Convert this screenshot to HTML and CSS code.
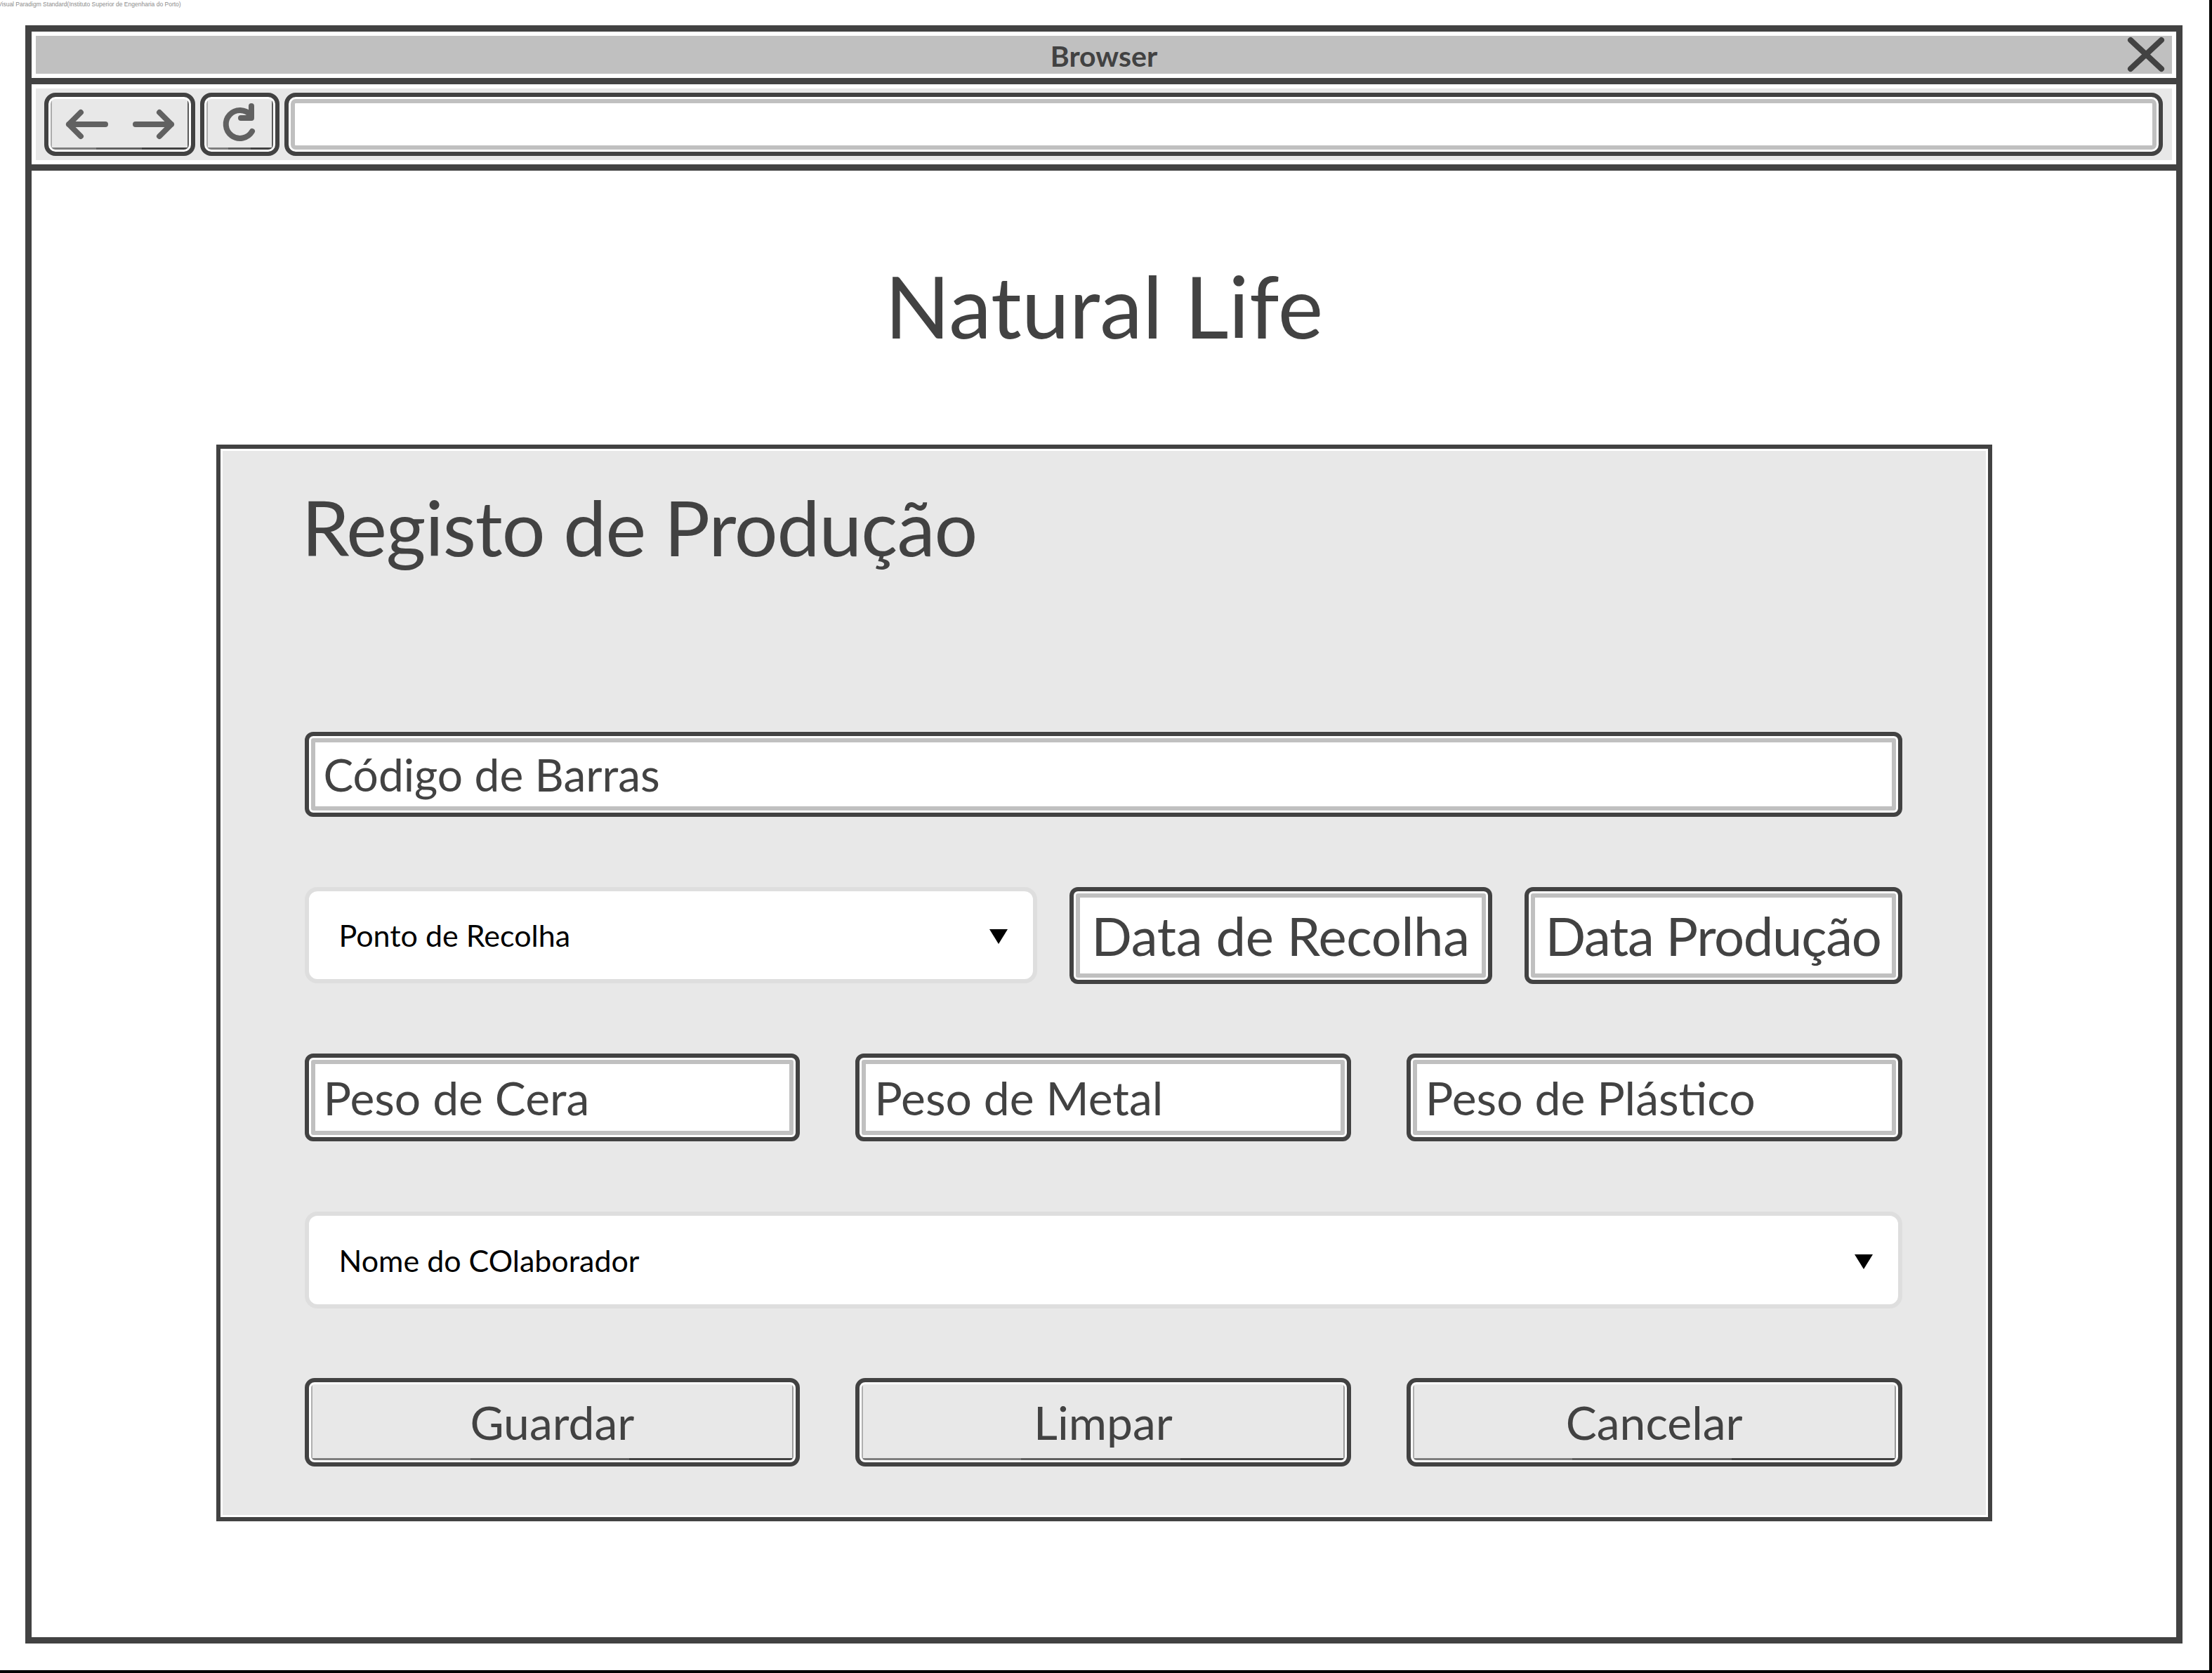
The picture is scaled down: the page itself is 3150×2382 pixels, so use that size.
FILE: index.html
```html
<!DOCTYPE html>
<html lang="pt">
<head>
<meta charset="utf-8">
<title>Natural Life - Registo de Produção</title>
<link rel="stylesheet" href="styles.css">
</head>
<body>
<div class="page">
  <div class="watermark">Visual Paradigm Standard(Instituto Superior de Engenharia do Porto)</div>
  <div class="window">
    <div class="bar-wrap">
      <div class="titlebar">
        <span></span>
        <span class="title">Browser</span>
        <svg class="close" width="54" height="54" viewBox="0 0 54 54">
          <path d="M5 6 L49 47 M49 6 L5 47" stroke="#424242" stroke-width="8" stroke-linecap="round" fill="none"/>
        </svg>
      </div>
    </div>
    <div class="sep"></div>
    <div class="bar-wrap">
      <div class="toolbar">
        <div class="tbtn nav">
          <svg width="203" height="78" viewBox="0 0 203 78">
            <g stroke="#616161" stroke-width="8" stroke-linecap="round" stroke-linejoin="round" fill="none">
              <path d="M81 39 H29 M46 22 L29 39 L46 56"/>
              <path d="M124 39 H175 M158 22 L175 39 L158 56"/>
            </g>
          </svg>
        </div>
        <div class="tbtn refresh">
          <svg width="101" height="78" viewBox="0 0 101 78">
            <g stroke="#616161" stroke-width="8" stroke-linecap="round" stroke-linejoin="round" fill="none">
              <path d="M66 26 A20 20 0 1 0 68 49"/>
              <path d="M67 13 V30 H52"/>
            </g>
          </svg>
        </div>
        <div class="url"></div>
      </div>
    </div>
    <div class="sep"></div>
    <main class="content">
      <h1 class="brand">Natural Life</h1>
      <section class="panel">
        <h2 class="panel-title">Registo de Produção</h2>
        <div class="field barcode">Código de Barras</div>
        <div class="row row-dates">
          <div class="select ponto"><span>Ponto de Recolha</span><i class="caret"></i></div>
          <div class="field date recolha">Data de Recolha</div>
          <div class="field date producao">Data Produção</div>
        </div>
        <div class="row row-three row-pesos">
          <div class="field peso">Peso de Cera</div>
          <div class="field peso">Peso de Metal</div>
          <div class="field peso">Peso de Plástico</div>
        </div>
        <div class="select colab"><span>Nome do COlaborador</span><i class="caret"></i></div>
        <div class="row row-three row-buttons">
          <div class="btn">Guardar</div>
          <div class="btn">Limpar</div>
          <div class="btn">Cancelar</div>
        </div>
      </section>
    </main>
  </div>
</div>
</body>
</html>
```

FILE: styles.css
```css
* { box-sizing: border-box; }

html, body {
  margin: 0;
  padding: 0;
  background: #fff;
}

.page {
  position: relative;
  width: 3150px;
  height: 2382px;
  padding: 36px 0 0 36px;
  border-right: 4px solid #000;
  border-bottom: 4px solid #000;
  background: #fff;
  font-family: Lato, "Open Sans", sans-serif;
  color: #424242;
}

.watermark {
  position: absolute;
  left: -3px;
  top: 1px;
  font-family: "Liberation Sans", Arial, sans-serif;
  font-size: 8.5px;
  line-height: 11px;
  color: #8c8c8c;
  white-space: nowrap;
}

.window {
  width: 3072px;
  height: 2304px;
  border: 9px solid #424242;
  display: flex;
  flex-direction: column;
  background: #fff;
}

.bar-wrap {
  padding: 6px;
}

.sep {
  height: 9px;
  background: #424242;
  flex: none;
}

.titlebar {
  height: 54px;
  background: #c0c0c0;
  display: grid;
  grid-template-columns: 1fr auto 1fr;
  align-items: center;
}

.title {
  font-size: 41px;
  font-weight: 700;
  line-height: 1;
  color: #424242;
  padding-top: 2px;
}

.close {
  justify-self: end;
  margin-right: 10px;
  display: block;
}

.toolbar {
  height: 102px;
  background: #e8e8e8;
  display: flex;
  align-items: center;
  padding: 0 13px 0 12px;
  gap: 7px;
}

.tbtn {
  height: 90px;
  border: 6px solid #424242;
  border-radius: 16px;
  background:
    linear-gradient(#ababab, #ababab) no-repeat left 3px top 3px / 2px calc(100% - 6px),
    linear-gradient(#5a5a5a, #5a5a5a) no-repeat right 3px top 3px / 2px calc(100% - 6px),
    linear-gradient(to right, #7e7e7e 0 33%, #606060 33% 66%, #424242 66%) no-repeat left 3px bottom 3px / calc(100% - 6px) 3px,
    #e8e8e8;
  box-shadow: inset 0 0 0 3px #fff;
  flex: none;
}

.tbtn svg { display: block; }

.nav { width: 215px; }
.refresh { width: 113px; }

.url {
  flex: 1;
  height: 90px;
  border: 6px solid #424242;
  border-radius: 16px;
  background: #fff;
  box-shadow: inset 0 0 0 3px #fff, inset 0 0 0 9px #c0c0c0;
}

.content {
  flex: 1;
  padding-top: 131px;
  display: flex;
  flex-direction: column;
  align-items: center;
}

.brand {
  margin: 0 0 137px;
  font-size: 122px;
  line-height: 122px;
  font-weight: 400;
  color: #424242;
  text-align: center;
}

.panel {
  width: 2529px;
  border: 6px solid #424242;
  background: #e8e8e8;
  box-shadow: inset 0 0 0 3px #fff;
  padding: 56px 122px 72px 120px;
  display: flex;
  flex-direction: column;
}

.panel-title {
  margin: 0 0 238px -4px;
  font-size: 109px;
  line-height: 109px;
  font-weight: 400;
  letter-spacing: -1px;
  color: #424242;
}

.field {
  border: 6px solid #424242;
  border-radius: 12px;
  background: #fff;
  box-shadow: inset 0 0 0 3px #fff, inset 0 0 0 9px #c0c0c0;
  display: flex;
  align-items: center;
  padding: 0 0 0 21px;
  line-height: 1;
  color: #424242;
  white-space: nowrap;
}

.barcode {
  height: 121px;
  font-size: 64px;
  margin-bottom: 100px;
}

.row {
  display: flex;
}

.row-dates {
  height: 138px;
  gap: 46px;
  margin-bottom: 99px;
}

.row-three {
  display: grid;
  grid-template-columns: repeat(3, 1fr);
  gap: 79px;
}

.row-pesos {
  height: 125px;
  margin-bottom: 100px;
}

.peso {
  font-size: 66px;
}

.date {
  justify-content: center;
  padding: 0;
  flex: none;
}

.recolha {
  width: 602px;
  font-size: 76px;
  letter-spacing: -0.3px;
}

.producao {
  width: 538px;
  font-size: 76px;
  letter-spacing: -1.3px;
}

.select {
  border: 6px solid #dedede;
  border-radius: 18px;
  background: #fff;
  display: flex;
  align-items: center;
  justify-content: space-between;
  padding: 0 36px 0 43px;
  font-size: 43px;
  line-height: 1;
  color: #000;
}

.ponto {
  flex: 1;
  height: 137px;
  align-self: flex-start;
}

.colab {
  height: 138px;
  margin-bottom: 99px;
}

.caret {
  width: 0;
  height: 0;
  border-left: 13px solid transparent;
  border-right: 13px solid transparent;
  border-top: 21px solid #000;
  margin-top: 4px;
}

.row-buttons {
  height: 126px;
}

.btn {
  border: 6px solid #424242;
  border-radius: 14px;
  background:
    linear-gradient(#b0b0b0, #b0b0b0) no-repeat left 3px top 3px / 2px calc(100% - 6px),
    linear-gradient(#9a9a9a, #9a9a9a) no-repeat right 3px top 3px / 2px calc(100% - 6px),
    linear-gradient(to right, #7e7e7e 0 33%, #606060 33% 66%, #424242 66%) no-repeat left 3px bottom 3px / calc(100% - 6px) 3px,
    #e8e8e8;
  box-shadow: inset 0 0 0 3px #fff;
  display: flex;
  align-items: center;
  justify-content: center;
  font-size: 66px;
  line-height: 1;
  color: #424242;
}
```
